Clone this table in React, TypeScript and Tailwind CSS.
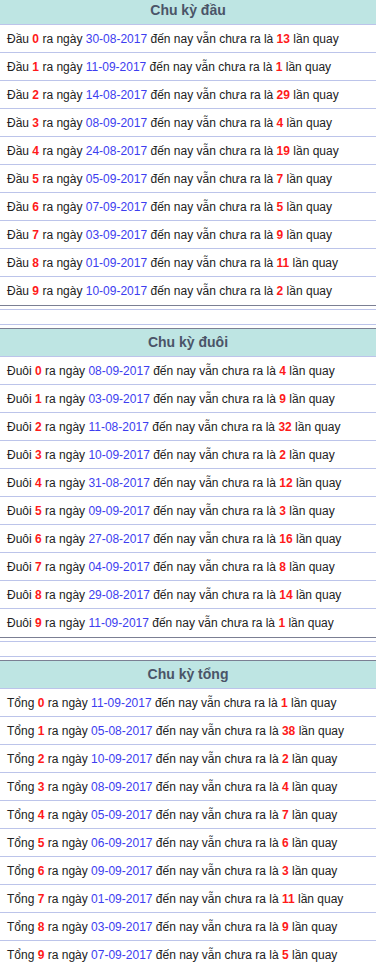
type Item = { n: number; date: string; count: number };

const dau: Item[] = [
  { n: 0, date: "30-08-2017", count: 13 },
  { n: 1, date: "11-09-2017", count: 1 },
  { n: 2, date: "14-08-2017", count: 29 },
  { n: 3, date: "08-09-2017", count: 4 },
  { n: 4, date: "24-08-2017", count: 19 },
  { n: 5, date: "05-09-2017", count: 7 },
  { n: 6, date: "07-09-2017", count: 5 },
  { n: 7, date: "03-09-2017", count: 9 },
  { n: 8, date: "01-09-2017", count: 11 },
  { n: 9, date: "10-09-2017", count: 2 },
];

const duoi: Item[] = [
  { n: 0, date: "08-09-2017", count: 4 },
  { n: 1, date: "03-09-2017", count: 9 },
  { n: 2, date: "11-08-2017", count: 32 },
  { n: 3, date: "10-09-2017", count: 2 },
  { n: 4, date: "31-08-2017", count: 12 },
  { n: 5, date: "09-09-2017", count: 3 },
  { n: 6, date: "27-08-2017", count: 16 },
  { n: 7, date: "04-09-2017", count: 8 },
  { n: 8, date: "29-08-2017", count: 14 },
  { n: 9, date: "11-09-2017", count: 1 },
];

const tong: Item[] = [
  { n: 0, date: "11-09-2017", count: 1 },
  { n: 1, date: "05-08-2017", count: 38 },
  { n: 2, date: "10-09-2017", count: 2 },
  { n: 3, date: "08-09-2017", count: 4 },
  { n: 4, date: "05-09-2017", count: 7 },
  { n: 5, date: "06-09-2017", count: 6 },
  { n: 6, date: "09-09-2017", count: 3 },
  { n: 7, date: "01-09-2017", count: 11 },
  { n: 8, date: "03-09-2017", count: 9 },
  { n: 9, date: "07-09-2017", count: 5 },
];

function Section({ title, label, items }: { title: string; label: string; items: Item[] }) {
  return (
    <div className="border-y border-[#7b7f93]">
      <div className="h-[28px] bg-[#bee5e3] border-b border-[#bcc4ea] flex items-center justify-center text-[14px] font-bold text-[#4a5468]">
        {title}
      </div>
      {items.map((it, i) => (
        <div
          key={it.n}
          className={`h-[28px] flex items-center pl-[7px] text-[12px] text-[#222] whitespace-nowrap ${i < items.length - 1 ? "border-b border-[#bcc4ea]" : ""}`}
        >
          {label}&nbsp;<b className="text-[#ff1a1a]">{it.n}</b>&nbsp;ra ngày&nbsp;
          <span className="text-[#3d3df0]">{it.date}</span>&nbsp;đến nay vẫn chưa ra là&nbsp;
          <b className="text-[#ff1a1a]">{it.count}</b>&nbsp;lần quay
        </div>
      ))}
    </div>
  );
}

function Spacer() {
  return (
    <div className="pt-[3px] pb-[3px]">
      <div className="h-[16px] border-y border-[#bcc4ea]" />
    </div>
  );
}

export default function App() {
  return (
    <div className="w-[376px] h-[965px] overflow-hidden bg-white font-['Liberation_Sans',Arial,sans-serif]">
      <div className="-mt-[4px]">
        <Section title="Chu kỳ đầu" label="Đầu" items={dau} />
        <Spacer />
        <Section title="Chu kỳ đuôi" label="Đuôi" items={duoi} />
        <Spacer />
        <Section title="Chu kỳ tổng" label="Tổng" items={tong} />
      </div>
    </div>
  );
}
